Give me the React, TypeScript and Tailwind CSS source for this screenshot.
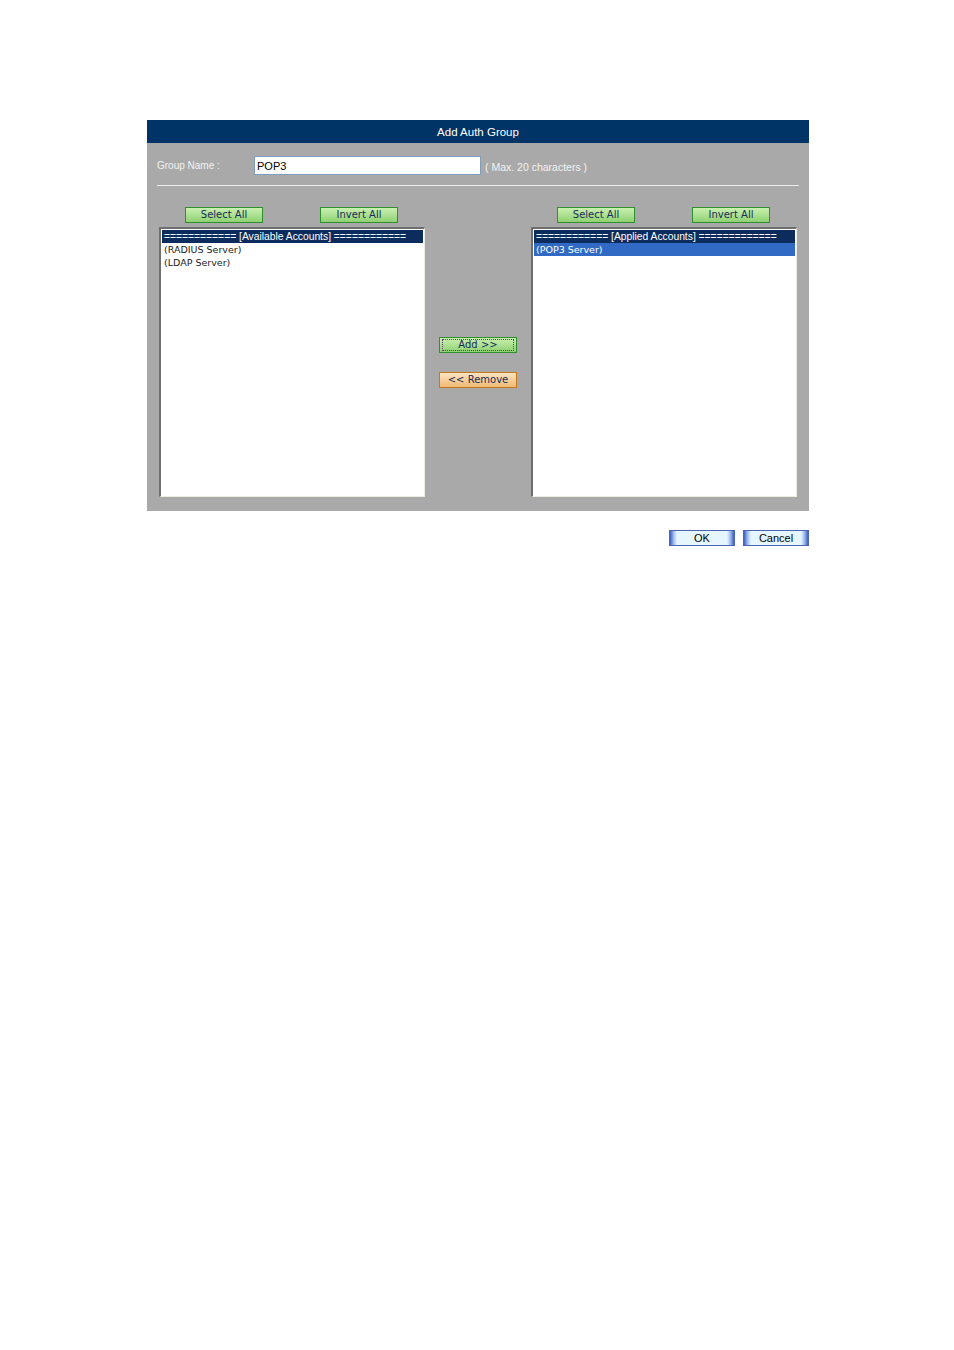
const verdana = "font-['DejaVu_Sans',Verdana,sans-serif]";
const arial = "font-['Liberation_Sans',Arial,sans-serif]";

function GreenButton({ label, focused }: { label: string; focused?: boolean }) {
  return (
    <button
      className={`w-[78px] h-[16px] border border-[#2f8f2f] bg-gradient-to-b from-[#c9f0b0] to-[#8fd172] text-[10px] leading-[14px] text-[#162c58] ${verdana} flex items-center justify-center`}
    >
      <span className={focused ? "w-[72px] h-[12px] border border-dotted border-[#6a2a7a] flex items-center justify-center leading-[10px]" : ""}>
        {label}
      </span>
    </button>
  );
}

function BlueButton({ label }: { label: string }) {
  return (
    <button
      className={`w-[66px] h-[16px] border border-[#4a64b8] bg-[linear-gradient(to_right,#3d5fc4_0px,#a9c3f0_4px,#e6f6ff_7px,#e6f6ff_calc(100%-7px),#a9c3f0_calc(100%-4px),#3d5fc4_100%)] text-[11px] leading-[14px] text-black ${arial}`}
    >
      {label}
    </button>
  );
}

function ListBox({ title, items, selected }: { title: string; items: string[]; selected?: number }) {
  return (
    <div className="w-[266px] h-[270px] bg-white border-t-2 border-l-2 border-t-[#6e6e6e] border-l-[#6e6e6e] border-b border-r border-b-[#ecebe4] border-r-[#ecebe4] p-[1px]">
      <div className={`h-[13px] bg-[#0c2c5e] text-white text-[10.3px] leading-[13px] pl-[2px] whitespace-nowrap overflow-hidden ${arial}`}>
        {title}
      </div>
      {items.map((it, i) => (
        <div
          key={it}
          className={`h-[13px] text-[9.5px] leading-[13px] pl-[2px] whitespace-nowrap ${verdana} ${
            selected === i ? "bg-[#316ac5] text-white" : "text-[#222]"
          }`}
        >
          {it}
        </div>
      ))}
    </div>
  );
}

export default function App() {
  return (
    <div className="w-[954px] h-[1350px] bg-white pt-[120px] pl-[147px]">
      <div className="w-[662px] bg-[#a9a9a9]">
        <div className={`h-[23px] bg-[#003366] text-white text-[11.5px] leading-[24px] text-center ${arial}`}>
          Add Auth Group
        </div>
        <div className="px-[10px]">
          <div className="flex items-center h-[42px] pt-[3px]">
            <span className={`w-[97px] text-[10px] text-[#f2f2f2] ${arial}`}>Group Name :</span>
            <input
              defaultValue="POP3"
              className={`w-[227px] h-[19px] bg-white border border-[#7f9db9] px-[2px] text-[11px] text-black outline-none ${arial}`}
            />
            <span className={`ml-[4px] mt-[4px] text-[10.5px] text-[#f2f2f2] ${arial}`}>( Max. 20 characters )</span>
          </div>
          <div className="h-[1px] bg-[#ececec] w-[642px]" />
        </div>
        <div className="flex pl-[12px] pt-[21px] pb-[14px]">
          <div className="flex flex-col">
            <div className="flex pl-[26px] gap-[57px] h-[16px]">
              <GreenButton label="Select All" />
              <GreenButton label="Invert All" />
            </div>
            <div className="mt-[4px]">
              <ListBox
                title="============ [Available Accounts] ============"
                items={["(RADIUS Server)", "(LDAP Server)"]}
              />
            </div>
          </div>
          <div className="w-[106px] flex flex-col items-center pt-[130px] gap-[19px]">
            <GreenButton label="Add >>" focused />
            <button
              className={`w-[78px] h-[16px] border border-[#c27a1c] bg-gradient-to-b from-[#fde4c0] to-[#f1b873] text-[10px] leading-[14px] text-[#162c58] ${verdana}`}
            >
              &lt;&lt; Remove
            </button>
          </div>
          <div className="flex flex-col">
            <div className="flex pl-[26px] gap-[57px] h-[16px]">
              <GreenButton label="Select All" />
              <GreenButton label="Invert All" />
            </div>
            <div className="mt-[4px]">
              <ListBox
                title="============ [Applied Accounts] ============="
                items={["(POP3 Server)"]}
                selected={0}
              />
            </div>
          </div>
        </div>
      </div>
      <div className="w-[662px] flex justify-end gap-[8px] mt-[19px]">
        <BlueButton label="OK" />
        <BlueButton label="Cancel" />
      </div>
    </div>
  );
}
